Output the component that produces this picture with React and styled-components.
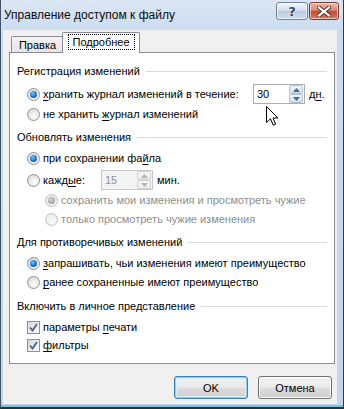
import React from 'react';
import styled, { createGlobalStyle } from 'styled-components';

const Global = createGlobalStyle`
  html, body { margin: 0; padding: 0; background: #fff; }
  body {
    font-family: "Liberation Sans", Arial, sans-serif;
    font-size: 11px;
    color: #000;
  }
  * { box-sizing: border-box; }
`;

const Window = styled.div`
  position: relative;
  width: 344px;
  height: 409px;
  display: flex;
  flex-direction: column;
  background: linear-gradient(180deg, #dbe6f4 0px, #ccdcef 30px, #c3d5ea 100%);
  border-left: 1px solid #44515f;
  border-right: 1px solid #2f3a46;
  border-bottom: 2px solid #27313b;
  box-shadow: inset 0 -2px 0 #79c5e0;
  overflow: hidden;
`;

const TitleBar = styled.div`
  height: 30px;
  flex: 0 0 30px;
  display: flex;
  align-items: flex-start;
  padding: 0 4px 0 3px;
`;

const Title = styled.div`
  flex: 1;
  line-height: 30px;
  height: 30px;
  font-size: 12px;
  color: #0b0b0b;
  white-space: nowrap;
`;

const CaptionButtons = styled.div`
  display: flex;
  gap: 1px;
  margin-top: 2px;
`;

const CaptionButton = styled.div`
  width: ${p => p.$w}px;
  height: 18px;
  border-radius: 3px;
  display: flex;
  align-items: center;
  justify-content: center;
  border: 1px solid ${p => (p.$close ? '#7d3a30' : '#73849a')};
  background: ${p =>
    p.$close
      ? 'linear-gradient(180deg, #eab3a6 0%, #dc8d7b 45%, #c54a33 52%, #d27a60 100%)'
      : 'linear-gradient(180deg, #eef3f9 0%, #d6e1ee 45%, #bccde1 52%, #cfdced 100%)'};
  box-shadow: inset 0 0 0 1px rgba(255, 255, 255, 0.55);
`;

const HelpGlyph = styled.span`
  font-family: "DejaVu Sans", sans-serif;
  font-size: 13px;
  font-weight: bold;
  color: #33465c;
  line-height: 1;
  text-shadow: 0 0 2px #fff, 0 0 1px #fff;
`;

const Client = styled.div`
  flex: 1;
  margin: 0 6px 3px 2px;
  background: #f0f0f0;
  display: flex;
  flex-direction: column;
  padding: 2px 2px 0 6px;
`;

const TabStrip = styled.div`
  display: flex;
  align-items: flex-end;
  height: 21px;
  padding-left: 2px;
`;

const Tab = styled.div`
  position: relative;
  z-index: ${p => (p.$active ? 2 : 1)};
  width: ${p => p.$w}px;
  height: ${p => (p.$active ? 21 : 17)}px;
  margin-left: ${p => (p.$active ? -2 : 0)}px;
  display: flex;
  align-items: center;
  justify-content: center;
  border: 1px solid #898c95;
  border-bottom: none;
  border-radius: 2px 2px 0 0;
  background: ${p => (p.$active ? '#fff' : 'linear-gradient(180deg, #f4f4f4 0%, #e4e4e4 100%)')};
  padding-bottom: ${p => (p.$active ? 3 : 0)}px;
  white-space: nowrap;
`;

const FocusRect = styled.span`
  border: 1px dotted #000;
  width: 67px;
  height: 16px;
  display: inline-flex;
  align-items: center;
  justify-content: center;
`;

const Panel = styled.div`
  position: relative;
  z-index: 1;
  margin-top: -1px;
  background: #fff;
  border: 1px solid #898c95;
  padding: 9px 7px 9px 7px;
  display: flex;
  flex-direction: column;
`;

const GroupHeader = styled.div`
  display: flex;
  align-items: center;
  height: 18px;
  margin-top: ${p => p.$mt || 0}px;
  gap: 6px;
  white-space: nowrap;
  &::after {
    content: '';
    flex: 1;
    height: 1px;
    background: #d9d9d9;
    margin-top: 1px;
  }
`;

const Row = styled.div`
  display: flex;
  align-items: center;
  height: 18px;
  margin-top: ${p => p.$mt || 0}px;
  padding-left: ${p => p.$indent || 10}px;
  color: ${p => (p.$disabled ? '#8e8e8e' : '#000')};
  white-space: nowrap;
`;

const Label = styled.span`
  display: inline-block;
  width: ${p => (p.$w ? `${p.$w}px` : 'auto')};
`;

const Key = styled.span`
  text-decoration: underline;
  text-underline-offset: 2px;
  text-decoration-thickness: 1px;
`;

const Radio = styled.span`
  position: relative;
  flex: 0 0 13px;
  width: 13px;
  height: 13px;
  margin-right: 3px;
  border-radius: 50%;
  border: 1px solid ${p => (p.$disabled ? '#c2c2c2' : '#8f9091')};
  background: ${p =>
    p.$disabled
      ? 'radial-gradient(circle at 60% 65%, #fbfbfb 0%, #ececec 60%, #e2e2e2 100%)'
      : 'radial-gradient(circle at 60% 65%, #ffffff 0%, #e6e6e6 55%, #cfcfcf 100%)'};
  &::after {
    content: '';
    display: ${p => (p.$checked ? 'block' : 'none')};
    position: absolute;
    left: 2px;
    top: 2px;
    width: 7px;
    height: 7px;
    border-radius: 50%;
    background: ${p =>
      p.$disabled
        ? 'radial-gradient(circle at 40% 35%, #d6d6d6 0%, #a8a8a8 60%, #8c8c8c 100%)'
        : 'radial-gradient(circle at 40% 35%, #6fc3f5 0%, #1f73c0 55%, #0b3f7d 100%)'};
  }
`;

const CheckBox = styled.span`
  flex: 0 0 13px;
  width: 13px;
  height: 13px;
  margin-right: 3px;
  border: 1px solid #8f9091;
  background: linear-gradient(135deg, #d6d6d6 0%, #f4f4f4 70%, #ffffff 100%);
  display: flex;
  align-items: center;
  justify-content: center;
`;

const Spin = styled.div`
  display: flex;
  width: 52px;
  height: 20px;
  border: 1px solid ${p => (p.$disabled ? '#c5c7cb' : '#abadb3')};
  background: ${p => (p.$disabled ? '#f4f4f4' : '#fff')};
  margin-right: 4px;
`;

const SpinValue = styled.span`
  flex: 1;
  padding-left: 3px;
  line-height: 18px;
  color: ${p => (p.$disabled ? '#8e8e8e' : '#000')};
`;

const SpinButtons = styled.div`
  width: 15px;
  display: flex;
  flex-direction: column;
  padding: 0 1px 0 0;
`;

const SpinButton = styled.div`
  flex: 1;
  display: flex;
  align-items: center;
  justify-content: center;
  border: 1px solid ${p => (p.$disabled ? '#d0d2d5' : '#b2c1d2')};
  border-radius: 2px;
  background: ${p =>
    p.$disabled
      ? 'linear-gradient(180deg, #f7f7f7, #ececec)'
      : 'linear-gradient(180deg, #f3f8fc 0%, #dde9f5 50%, #cfdff0 100%)'};
`;

const ButtonRow = styled.div`
  display: flex;
  justify-content: flex-end;
  gap: 10px;
  padding: 0 3px 0 0;
  margin-top: 12px;
`;

const Button = styled.div`
  width: 74px;
  height: 23px;
  border-radius: 3px;
  display: flex;
  align-items: center;
  justify-content: center;
  border: 1px solid ${p => (p.$default ? '#3c7fb1' : '#707070')};
  background: linear-gradient(180deg, #f2f2f2 0%, #ebebeb 48%, #dddddd 52%, #cfcfcf 100%);
  box-shadow: ${p =>
    p.$default ? 'inset 0 0 0 1px #8fd3f3, inset 0 0 0 2px #d5eefa' : 'inset 0 0 0 1px #fbfbfb'};
`;

const Cursor = styled.svg`
  position: absolute;
  left: 265px;
  top: 106px;
  z-index: 5;
`;

const Arrow = ({ up, disabled }) => (
  <svg width="7" height="4" viewBox="0 0 7 4">
    <path
      d={up ? 'M0 4 L3.5 0 L7 4 Z' : 'M0 0 L3.5 4 L7 0 Z'}
      fill={disabled ? '#b4b4b4' : '#4f6584'}
    />
  </svg>
);

const SpinBox = ({ value, disabled }) => (
  <Spin $disabled={disabled}>
    <SpinValue $disabled={disabled}>{value}</SpinValue>
    <SpinButtons>
      <SpinButton $disabled={disabled}>
        <Arrow up disabled={disabled} />
      </SpinButton>
      <SpinButton $disabled={disabled}>
        <Arrow disabled={disabled} />
      </SpinButton>
    </SpinButtons>
  </Spin>
);

const Check = () => (
  <CheckBox>
    <svg width="9" height="9" viewBox="0 0 9 9">
      <path d="M1 4.5 L3.5 7.5 L8 1" fill="none" stroke="#48608f" strokeWidth="1.8" />
    </svg>
  </CheckBox>
);

export default function App() {
  return (
    <>
      <Global />
      <Window>
        <TitleBar>
          <Title>Управление доступом к файлу</Title>
          <CaptionButtons>
            <CaptionButton $w={32}>
              <HelpGlyph>?</HelpGlyph>
            </CaptionButton>
            <CaptionButton $w={30} $close>
              <svg width="14" height="11" viewBox="0 0 14 11">
                <path d="M2 1.5 L12 9.5 M12 1.5 L2 9.5" stroke="#5a2a24" strokeWidth="4" strokeLinecap="square" />
                <path d="M2 1.5 L12 9.5 M12 1.5 L2 9.5" stroke="#ffffff" strokeWidth="2.2" strokeLinecap="square" />
              </svg>
            </CaptionButton>
          </CaptionButtons>
        </TitleBar>
        <Client>
          <TabStrip>
            <Tab $w={53}>Правка</Tab>
            <Tab $w={78} $active>
              <FocusRect>Подробнее</FocusRect>
            </Tab>
          </TabStrip>
          <Panel>
            <GroupHeader>Регистрация изменений</GroupHeader>
            <Row $mt={5}>
              <Radio $checked />
              <Label $w={210}>
                <Key>х</Key>ранить журнал изменений в течение:
              </Label>
              <SpinBox value="30" />
              <span>
                д<Key>н</Key>.
              </span>
            </Row>
            <Row $mt={2}>
              <Radio />
              <span>
                не хранить <Key>ж</Key>урнал изменений
              </span>
            </Row>

            <GroupHeader $mt={5}>Обновлять изменения</GroupHeader>
            <Row $mt={3}>
              <Radio $checked />
              <span>
                при сохранении фа<Key>й</Key>ла
              </span>
            </Row>
            <Row $mt={4}>
              <Radio />
              <Label $w={58}>
                кажд<Key>ы</Key>е:
              </Label>
              <SpinBox value="15" disabled />
              <span>мин.</span>
            </Row>
            <Row $mt={2} $indent={28} $disabled>
              <Radio $checked $disabled />
              <span>сохранить мои изменения и просмотреть чужие</span>
            </Row>
            <Row $mt={1} $indent={28} $disabled>
              <Radio $disabled />
              <span>только просмотреть чужие изменения</span>
            </Row>

            <GroupHeader $mt={5}>Для противоречивых изменений</GroupHeader>
            <Row $mt={3}>
              <Radio $checked />
              <span>
                <Key>з</Key>апрашивать, чьи изменения имеют преимущество
              </span>
            </Row>
            <Row $mt={1}>
              <Radio />
              <span>
                <Key>р</Key>анее сохраненные имеют преимущество
              </span>
            </Row>

            <GroupHeader $mt={6}>Включить в личное представление</GroupHeader>
            <Row $mt={3}>
              <Check />
              <span>
                параметры <Key>п</Key>ечати
              </span>
            </Row>
            <Row $mt={0}>
              <Check />
              <span>
                <Key>ф</Key>ильтры
              </span>
            </Row>
          </Panel>
          <ButtonRow>
            <Button $default>OK</Button>
            <Button>Отмена</Button>
          </ButtonRow>
        </Client>
        <Cursor width="13" height="21" viewBox="0 0 13 21">
          <path
            d="M0.5 0.5 L0.5 16.5 L4.5 12.8 L7.2 19.2 L9.6 18.2 L7 12 L12 12 Z"
            fill="#fff"
            stroke="#000"
            strokeWidth="1"
            strokeLinejoin="miter"
          />
        </Cursor>
      </Window>
    </>
  );
}
